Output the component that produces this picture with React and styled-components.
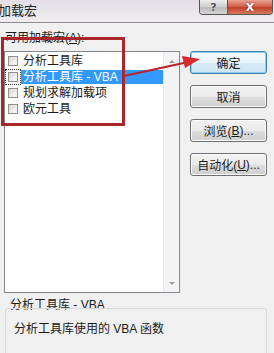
import styled, { createGlobalStyle } from 'styled-components';

const GlobalStyle = createGlobalStyle`
  html, body {
    margin: 0;
    padding: 0;
    width: 274px;
    height: 353px;
    overflow: hidden;
    background: #f0f0f0;
  }

  * {
    box-sizing: border-box;
  }
`;

const Dialog = styled.div`
  position: relative;
  width: 274px;
  height: 353px;
  overflow: hidden;
  background: #f0f0f0;
  font-family: 'Liberation Sans', 'Noto Sans CJK SC', sans-serif;
  font-size: 12px;
  color: #1a1a1a;
`;

const TitleBar = styled.div`
  display: flex;
  align-items: flex-start;
  height: 23px;
  background: linear-gradient(180deg, #e2dee4 0%, #ebe8ec 60%, #eeecef 100%);
  border-bottom: 1px solid #8c8c8c;
`;

const Title = styled.div`
  margin-left: -2px;
  padding-top: 3px;
  font-size: 13px;
  line-height: 16px;
  color: #222;
`;

const CaptionButtons = styled.div`
  display: flex;
  margin-left: auto;
  margin-right: 1px;
  height: 15px;
  border: 1px solid #555;
  border-top: none;
  border-radius: 0 0 4px 4px;
  overflow: hidden;
`;

const CaptionButton = styled.div`
  display: flex;
  align-items: center;
  justify-content: center;
  width: ${(props) => props.width}px;
  height: 100%;
  font-family: 'DejaVu Sans', sans-serif;
  font-weight: bold;
  font-size: 11px;
  line-height: 1;
  color: ${(props) => (props.close ? '#fff' : '#555')};
  text-shadow: ${(props) => (props.close ? '0 0 2px #6a1a10' : '0 0 1px #fff')};
  background: ${(props) =>
    props.close
      ? 'linear-gradient(180deg, #e6a393 0%, #d2634c 45%, #c2402a 55%, #d57a5e 100%)'
      : 'linear-gradient(180deg, #eeeeee 0%, #d2d2d2 45%, #bcbcbc 55%, #d4d4d4 100%)'};
  & + & {
    border-left: 1px solid #555;
  }
`;

const Body = styled.div`
  display: flex;
  flex-direction: column;
  padding: 8px 7px 0 4px;
`;

const Main = styled.div`
  display: flex;
  gap: 10px;
`;

const LeftColumn = styled.div`
  display: flex;
  flex-direction: column;
  width: 176px;
`;

const FieldLabel = styled.div`
  height: 14px;
  line-height: 14px;
  margin-bottom: 6px;
  padding-left: 1px;
  white-space: nowrap;

  u {
    text-decoration: underline;
  }
`;

const ListBox = styled.div`
  display: flex;
  height: 242px;
  background: #fff;
  border: 1px solid #828790;
`;

const Items = styled.div`
  flex: 1;
  display: flex;
  flex-direction: column;
  padding-top: 1px;
`;

const Row = styled.div`
  display: flex;
  align-items: center;
  height: 16px;
  padding-left: 3px;
`;

const CheckBox = styled.span`
  flex: none;
  width: 10px;
  height: 10px;
  margin-right: 3px;
  border: 1px solid #8e8f8f;
  background: linear-gradient(135deg, #d6d6d6 0%, #eeeeee 60%, #fafafa 100%);
  outline: ${(props) => (props.focused ? '1px dotted #333' : 'none')};
  outline-offset: 2px;
`;

const ItemText = styled.span`
  flex: 1;
  height: 14px;
  line-height: 14px;
  padding-left: 2px;
  white-space: nowrap;
  background: ${(props) => (props.selected ? '#3399ff' : 'transparent')};
  color: ${(props) => (props.selected ? '#fff' : '#1a1a1a')};
`;

const ScrollBar = styled.div`
  display: flex;
  flex-direction: column;
  justify-content: space-between;
  align-items: center;
  width: 16px;
  padding: 8px 0 7px;
  background: #f4f4f4;
  border-left: 1px solid #e6e6e6;
`;

const Arrow = styled.span`
  width: 0;
  height: 0;
  border-left: 3px solid transparent;
  border-right: 3px solid transparent;
  border-${(props) => (props.down ? 'top' : 'bottom')}: 3px solid #9a9a9a;
`;

const RightColumn = styled.div`
  display: flex;
  flex-direction: column;
  gap: 11px;
  padding-top: 20px;
  width: 77px;
`;

const Button = styled.div`
  display: flex;
  align-items: center;
  justify-content: center;
  height: 23px;
  border: 1px solid ${(props) => (props.primary ? '#3c7fb1' : '#707070')};
  border-radius: 3px;
  background: ${(props) =>
    props.primary
      ? 'linear-gradient(180deg, #f4fafd 0%, #e9f4fa 50%, #d6ebf6 51%, #cde5f3 100%)'
      : 'linear-gradient(180deg, #f2f2f2 0%, #ebebeb 50%, #dddddd 51%, #cfcfcf 100%)'};
  box-shadow: inset 0 0 0 1px ${(props) => (props.primary ? '#8ed0f0' : '#fcfcfc')};
  white-space: nowrap;
  color: #1a1a1a;
`;

const DescLabel = styled.div`
  margin-top: 6px;
  padding-left: 6px;
  height: 13px;
  line-height: 13px;
`;

const DescBox = styled.div`
  margin: -4px 0 0 1px;
  width: 262px;
  height: 60px;
  padding: 13px 0 0 8px;
  line-height: 14px;
  border: 1px solid #dadada;
  border-radius: 3px;
`;

const Callout = styled.div`
  position: absolute;
  left: 1px;
  top: 37px;
  width: 124px;
  height: 89px;
  border: 3px solid #a9272b;
  pointer-events: none;
`;

const Pointer = styled.svg`
  position: absolute;
  left: 0;
  top: 0;
  pointer-events: none;
`;

const addins = [
  { name: '分析工具库' },
  { name: '分析工具库 - VBA', selected: true },
  { name: '规划求解加载项' },
  { name: '欧元工具' },
];

const App = () => {
  return (
    <>
      <GlobalStyle />
      <Dialog>
        <TitleBar>
          <Title>加载宏</Title>
          <CaptionButtons>
            <CaptionButton width={27}>?</CaptionButton>
            <CaptionButton width={45} close>
              X
            </CaptionButton>
          </CaptionButtons>
        </TitleBar>
        <Body>
          <Main>
            <LeftColumn>
              <FieldLabel>
                可用加载宏(<u>A</u>):
              </FieldLabel>
              <ListBox>
                <Items>
                  {addins.map((item) => (
                    <Row key={item.name}>
                      <CheckBox focused={item.selected} />
                      <ItemText selected={item.selected}>{item.name}</ItemText>
                    </Row>
                  ))}
                </Items>
                <ScrollBar>
                  <Arrow />
                  <Arrow down />
                </ScrollBar>
              </ListBox>
            </LeftColumn>
            <RightColumn>
              <Button primary>确定</Button>
              <Button>取消</Button>
              <Button>
                浏览(<u>B</u>)...
              </Button>
              <Button>
                自动化(<u>U</u>)...
              </Button>
            </RightColumn>
          </Main>
          <DescLabel>分析工具库 - VBA</DescLabel>
          <DescBox>分析工具库使用的 VBA 函数</DescBox>
        </Body>
        <Callout />
        <Pointer width="274" height="353" viewBox="0 0 274 353">
          <line x1="124" y1="76" x2="186" y2="62.5" stroke="#b8242a" strokeWidth="2.2" />
          <polygon points="200,59 182,56 185,68" fill="#d42a2c" />
        </Pointer>
      </Dialog>
    </>
  );
};

export default App;
